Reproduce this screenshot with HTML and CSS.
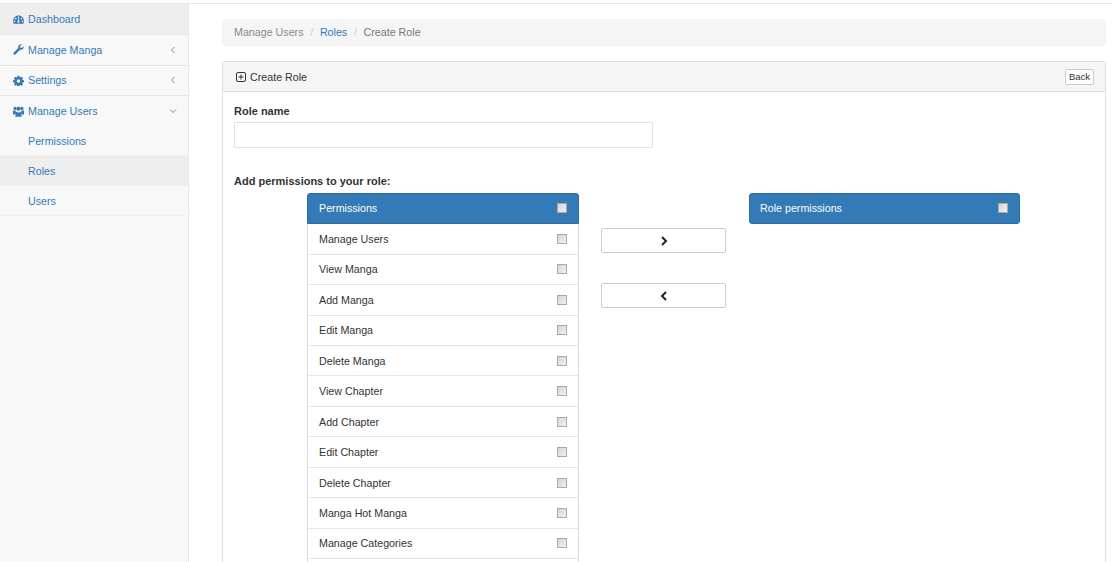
FILE: index.html
```html
<!DOCTYPE html>
<html lang="en">
<head>
    <meta charset="UTF-8">
    <meta name="viewport" content="width=device-width, initial-scale=1.0">
    <title>Create Role</title>
    <link rel="stylesheet" href="styles.css">
</head>
<body>
    <div class="topbar"></div>
    <div class="wrapper">
        <nav class="sidebar">
            <ul class="menu">
                <li class="menu-item active">
                    <a href="#">
                        <svg class="icon" viewBox="0 0 16 16"><path fill-rule="evenodd" d="M8 2C3.600 2 0 5.600 0 10c0 1.400.4 2.800 1.100 4h13.800c.7-1.200 1.100-2.600 1.100-4 0-4.400-3.600-8-8-8zM8 3.500a1.300 1.300 0 1 1 0 2.600 1.300 1.300 0 0 1 0-2.600zM3.800 5.300a1.300 1.300 0 1 1 0 2.600 1.300 1.300 0 0 1 0-2.600zm8.400 0a1.300 1.300 0 1 1 0 2.600 1.300 1.300 0 0 1 0-2.600zM2.200 9.300a1.300 1.300 0 1 1 0 2.600 1.300 1.300 0 0 1 0-2.600zm11.600 0a1.300 1.300 0 1 1 0 2.600 1.300 1.300 0 0 1 0-2.600zM7 8l.4-1.200h1.200L9 8l.2 2.600a1.500 1.500 0 1 1-2.400 0z"/></svg>
                        <span>Dashboard</span>
                    </a>
                </li>
                <li class="menu-item">
                    <a href="#">
                        <svg class="icon" viewBox="0 0 16 16"><path d="M15.500 4.300c0-.4-.1-.8-.2-1.100l-2.700 2.600-2-.5-.5-2L12.800.8c-.4-.2-.8-.3-1.200-.3C9.400.5 7.600 2.300 7.600 4.500c0 .5.100.9.200 1.300L.9 12.700c-.6.6-.6 1.600 0 2.200l.2.200c.6.6 1.600.6 2.200 0l6.900-6.900c.4.200.9.200 1.300.200 2.200 0 4-1.900 4-4.100z"/></svg>
                        <span>Manage Manga</span>
                        <svg class="caret" viewBox="0 0 8 8"><path d="M5.500 1 2.500 4l3 3"/></svg>
                    </a>
                </li>
                <li class="menu-item">
                    <a href="#">
                        <svg class="icon" viewBox="0 0 16 16"><path fill-rule="evenodd" d="M6.700 1h2.600l.4 2 1.300.6 1.800-1.100 1.800 1.800-1.100 1.800.6 1.300 2 .4v2.600l-2 .4-.6 1.300 1.100 1.800-1.800 1.800-1.800-1.100-1.300.6-.4 1.900H6.700l-.4-1.900-1.300-.6-1.800 1.100-1.800-1.800 1.100-1.800-.6-1.300-2-.4V7.800l2-.4.6-1.300-1.100-1.800 1.800-1.800L5 3.600l1.300-.6zM8 6.200a2.500 2.500 0 1 0 0 5 2.500 2.500 0 0 0 0-5z"/></svg>
                        <span>Settings</span>
                        <svg class="caret" viewBox="0 0 8 8"><path d="M5.500 1 2.500 4l3 3"/></svg>
                    </a>
                </li>
                <li class="menu-item open">
                    <a href="#">
                        <svg class="icon" viewBox="0 0 16 16"><circle cx="3" cy="3.500" r="2.300"/><circle cx="13" cy="3.500" r="2.300"/><circle cx="8" cy="4" r="3"/><path d="M0 6.500h3.500c.2 1.200.8 2.200 1.500 2.800-1.200.6-2 1.800-2.200 3.200H0zm16 0h-3.500c-.2 1.200-.8 2.200-1.500 2.800 1.200.6 2 1.800 2.200 3.200H16zM5.500 8.500c.7.800 1.500 1.200 2.500 1.200s1.800-.4 2.500-1.200c1.600.5 2 2.500 2 7h-9c0-4.500.4-6.500 2-7z"/></svg>
                        <span>Manage Users</span>
                        <svg class="caret" viewBox="0 0 8 8"><path d="M1 2.500l3 3 3-3"/></svg>
                    </a>
                    <ul class="submenu">
                        <li><a href="#">Permissions</a></li>
                        <li class="active"><a href="#">Roles</a></li>
                        <li><a href="#">Users</a></li>
                    </ul>
                </li>
            </ul>
        </nav>

        <main class="content">
            <ol class="breadcrumb">
                <li class="crumb-muted">Manage Users</li>
                <li><a href="#">Roles</a></li>
                <li>Create Role</li>
            </ol>

            <section class="panel">
                <header class="panel-heading">
                    <div class="panel-title">
                        <svg class="plus-box" viewBox="0 0 10 10"><rect x=".5" y=".5" width="9" height="9" rx="1.500"/><path d="M5 2.500v5M2.500 5h5"/></svg>
                        <span>Create Role</span>
                    </div>
                    <button class="btn-back">Back</button>
                </header>
                <div class="panel-body">
                    <label class="field-label" for="role-name">Role name</label>
                    <input class="field-input" id="role-name" type="text">

                    <p class="picker-label">Add permissions to your role:</p>
                    <div class="picker">
                        <div class="list-col">
                            <div class="list-head">
                                <span>Permissions</span>
                                <input class="check" type="checkbox">
                            </div>
                            <ul class="perm-list">
                                <li><span>Manage Users</span><input class="check" type="checkbox"></li>
                                <li><span>View Manga</span><input class="check" type="checkbox"></li>
                                <li><span>Add Manga</span><input class="check" type="checkbox"></li>
                                <li><span>Edit Manga</span><input class="check" type="checkbox"></li>
                                <li><span>Delete Manga</span><input class="check" type="checkbox"></li>
                                <li><span>View Chapter</span><input class="check" type="checkbox"></li>
                                <li><span>Add Chapter</span><input class="check" type="checkbox"></li>
                                <li><span>Edit Chapter</span><input class="check" type="checkbox"></li>
                                <li><span>Delete Chapter</span><input class="check" type="checkbox"></li>
                                <li><span>Manga Hot Manga</span><input class="check" type="checkbox"></li>
                                <li><span>Manage Categories</span><input class="check" type="checkbox"></li>
                                <li></li>
                            </ul>
                        </div>
                        <div class="move-col">
                            <button class="btn-move">
                                <svg viewBox="0 0 10 10"><path d="M3 1l4 4-4 4"/></svg>
                            </button>
                            <button class="btn-move">
                                <svg viewBox="0 0 10 10"><path d="M7 1L3 5l4 4"/></svg>
                            </button>
                        </div>
                        <div class="list-col list-right">
                            <div class="list-head">
                                <span>Role permissions</span>
                                <input class="check" type="checkbox">
                            </div>
                        </div>
                    </div>
                </div>
            </section>
        </main>
    </div>
</body>
</html>
```

FILE: styles.css
```css
* {
    box-sizing: border-box;
}

html, body {
    height: 100%;
    overflow: hidden;
}

body {
    margin: 0;
    background-color: #fff;
    color: #333;
    font-family: "Liberation Sans", Arial, sans-serif;
    font-size: 10.7px;
}

a {
    color: #337ab7;
    text-decoration: none;
}

ul, ol {
    list-style: none;
    margin: 0;
    padding: 0;
}

.topbar {
    height: 4px;
    border-bottom: 1px solid #e7e7e7;
}

.wrapper {
    display: flex;
    height: 558px;
    overflow: hidden;
}

/* sidebar */
.sidebar {
    width: 189px;
    flex-shrink: 0;
    background-color: #f8f8f8;
    border-right: 1px solid #e7e7e7;
}

.menu-item {
    border-bottom: 1px solid #e7e7e7;
}

.menu-item.open {
    border-bottom: none;
}

.menu-item > a {
    display: flex;
    align-items: center;
    height: 29.500px;
    padding: 0 11px 0 13px;
}

.menu-item.active > a,
.menu-item.open > a {
    height: 30px;
}

.menu-item.active > a {
    background-color: #eee;
}

.icon {
    width: 11px;
    height: 11px;
    margin-right: 4px;
    fill: #337ab7;
}

.caret {
    width: 8px;
    height: 8px;
    margin-left: auto;
    fill: none;
    stroke: #5b93c4;
    stroke-width: 1;
}

.submenu li {
    height: 30px;
    border-bottom: 1px solid #f1f1f1;
}

.submenu li a {
    display: flex;
    align-items: center;
    height: 100%;
    padding-left: 28px;
}

.submenu li.active {
    background-color: #eee;
}

/* main area */
.content {
    flex: 1;
    padding: 15px 6px 0 33px;
    min-width: 0;
}

.breadcrumb {
    display: flex;
    align-items: center;
    height: 27px;
    padding: 0 12px 1px;
    background-color: #f5f5f5;
    border-radius: 3px;
    color: #777;
    margin-bottom: 15px;
}

.breadcrumb li + li::before {
    content: "/";
    color: #ccc;
    padding: 0 6.700px;
}

.crumb-muted {
    color: #8a8a80;
}

.panel {
    border: 1px solid #ddd;
    border-radius: 3px;
    height: 600px;
}

.panel-heading {
    display: flex;
    align-items: center;
    justify-content: space-between;
    height: 30px;
    padding: 0 11px 0 13px;
    background-color: #f5f5f5;
    border-bottom: 1px solid #ddd;
    color: #333;
}

.panel-title {
    display: flex;
    align-items: center;
}

.plus-box {
    width: 10px;
    height: 10px;
    margin-right: 4px;
    fill: none;
    stroke: #333;
    stroke-width: 1;
}

.btn-back {
    width: 29px;
    height: 16px;
    padding: 0;
    font-family: inherit;
    font-size: 9.500px;
    color: #333;
    background-color: #fff;
    border: 1px solid #ccc;
    border-radius: 2px;
}

.panel-body {
    padding: 12px 11px 0;
}

.field-label {
    display: block;
    font-size: 11px;
    font-weight: bold;
    line-height: 15px;
    margin-bottom: 3px;
}

.field-input {
    display: block;
    width: 419px;
    height: 26px;
    border: 1px solid #e3e3e3;
    background-color: #fff;
}

.picker-label {
    margin: 26px 0 4px;
    font-size: 11px;
    font-weight: bold;
    line-height: 15px;
}

/* permission picker */
.picker {
    display: flex;
    margin-left: 73px;
}

.list-col {
    width: 272px;
    flex-shrink: 0;
}

.list-right {
    width: 271px;
}

.list-head {
    display: flex;
    align-items: center;
    justify-content: space-between;
    height: 31px;
    padding: 0 11px 1px 11px;
    background-color: #337ab7;
    border: 1px solid #2e6da4;
    border-radius: 3px 3px 0 0;
    color: #fff;
}

.list-right .list-head {
    padding-left: 10px;
    border-radius: 3px;
}

.perm-list {
    padding-top: .3px;
    border-left: 1px solid #ddd;
    border-right: 1px solid #ddd;
}

.perm-list li {
    display: flex;
    align-items: center;
    justify-content: space-between;
    height: 30.450px;
    padding: 0 11px;
    border-bottom: 1px solid #e7e7e7;
}

.check {
    appearance: none;
    width: 10px;
    height: 10px;
    margin: 0;
    border: 1px solid #a9a9a9;
    background: linear-gradient(135deg, #d4d4d4, #f2f2f2);
}

.move-col {
    width: 170px;
    flex-shrink: 0;
    padding: 35px 23px 0 22px;
}

.btn-move {
    display: flex;
    align-items: center;
    justify-content: center;
    width: 125px;
    height: 25px;
    margin-bottom: 30px;
    background-color: #fff;
    border: 1px solid #ccc;
    border-radius: 2px;
}

.btn-move svg {
    width: 10px;
    height: 10px;
    fill: none;
    stroke: #222;
    stroke-width: 2;
}
```
